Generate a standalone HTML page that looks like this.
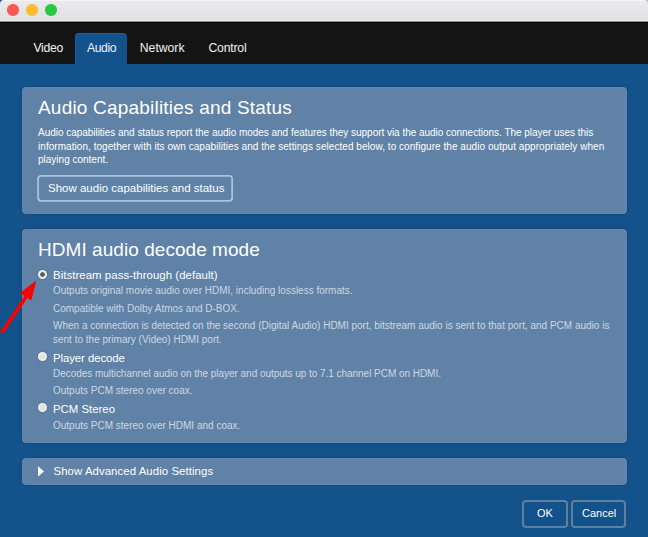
<!DOCTYPE html>
<html><head><meta charset="utf-8">
<style>
*{margin:0;padding:0;box-sizing:border-box}
html,body{width:648px;height:537px;overflow:hidden;background:#13528b;font-family:"Liberation Sans",sans-serif}
#titlebar{position:absolute;left:0;top:0;width:648px;height:22px;background:linear-gradient(#f6f5f7 0,#f6f5f7 1px,#eae9eb 1px,#e1e0e2 20px,#efefef 20px,#efefef 21px,#8c8c8c 21px);border-radius:4px 4px 0 0}
#trc{position:absolute;right:0;top:0;width:5px;height:5px;background:#b9b9b9}
.tl{position:absolute;top:4.4px;width:11.5px;height:11.5px;border-radius:50%}
#tabbar{position:absolute;left:0;top:22px;width:648px;height:42px;background:linear-gradient(#060606 0,#060606 1px,#141414 1px)}
.t{position:absolute;white-space:nowrap;color:#fff;line-height:1}
.tab{color:#f2f2f2;font-size:12.2px}
#activetab{position:absolute;left:75px;top:32.6px;width:52px;height:31.4px;background:#13528b;border-radius:4px 4px 0 0;box-shadow:inset 1px 1px 0 rgba(40,120,200,.35)}
.panel{position:absolute;left:22px;width:604.5px;background:#5f82a6;border-radius:4px;box-shadow:0 0 1.2px rgba(0,25,70,.7),inset 0 0 0 1px rgba(255,255,255,.04)}
.h{font-size:19px}
.body{font-size:10px}
.btn{position:absolute;border:2px solid #a8c2de;border-radius:4px}
.opt{font-size:11.4px}
.sub{font-size:10px;color:#cdd8e4}
.radio{position:absolute;width:9px;height:9px;border-radius:50%;background:radial-gradient(circle,#e0e0e0 0,#e6e6e6 2.5px,#f2f2f0 4.5px);box-shadow:0 0 1.5px rgba(10,50,100,.45)}
.radio.on{background:radial-gradient(circle,#555 0,#5a5a5a 1.9px,#ebebe9 2.7px,#ebebe9 4.5px)}
.dbtn{position:absolute;border:2px solid #5f819f;border-radius:4px}
</style></head><body>
<div id="trc"></div>
<div id="titlebar">
  <div class="tl" style="left:7.4px;background:#fc5753"></div>
  <div class="tl" style="left:26.3px;background:#fdbc2e"></div>
  <div class="tl" style="left:45px;background:#28c840"></div>
</div>
<div id="tabbar"></div>
<div id="activetab"></div>
<div class="t tab" style="left:33.5px;top:42px;letter-spacing:-0.3px">Video</div>
<div class="t tab" style="left:87px;top:42px;letter-spacing:-0.4px">Audio</div>
<div class="t tab" style="left:139.8px;top:42px">Network</div>
<div class="t tab" style="left:208.5px;top:42px;letter-spacing:-0.2px">Control</div>

<div class="panel" style="top:87px;height:126.5px"></div>
<div class="t h" style="left:38px;top:98px;letter-spacing:0.2px">Audio Capabilities and Status</div>
<div class="t body" style="left:38px;top:128px;letter-spacing:-0.03px">Audio capabilities and status report the audio modes and features they support via the audio connections. The player uses this</div>
<div class="t body" style="left:38px;top:142px;letter-spacing:0.05px">information, together with its own capabilities and the settings selected below, to configure the audio output appropriately when</div>
<div class="t body" style="left:38px;top:155px">playing content.</div>
<svg style="position:absolute;left:0;top:0" width="648" height="537"><rect x="38.15" y="175.8" width="194" height="25" rx="3" ry="3" fill="none" stroke="#a9c4e1" stroke-width="1.8"/></svg>
<div class="t" style="left:48px;top:183px;font-size:11.5px">Show audio capabilities and status</div>

<div class="panel" style="top:229px;height:214px"></div>
<div class="t h" style="left:38px;top:240px;letter-spacing:0.05px">HDMI audio decode mode</div>
<div class="radio on" style="left:37.5px;top:269.5px"></div>
<div class="t opt" style="left:53px;top:270px;letter-spacing:0.06px">Bitstream pass-through (default)</div>
<div class="t sub" style="left:53px;top:286px">Outputs original movie audio over HDMI, including lossless formats.</div>
<div class="t sub" style="left:53px;top:304px">Compatible with Dolby Atmos and D-BOX.</div>
<div class="t sub" style="left:53px;top:321px">When a connection is detected on the second (Digital Audio) HDMI port, bitstream audio is sent to that port, and PCM audio is</div>
<div class="t sub" style="left:53px;top:335px">sent to the primary (Video) HDMI port.</div>
<div class="radio" style="left:37.6px;top:352.1px"></div>
<div class="t opt" style="left:53px;top:353px;letter-spacing:-0.08px">Player decode</div>
<div class="t sub" style="left:53px;top:369px;letter-spacing:-0.035px">Decodes multichannel audio on the player and outputs up to 7.1 channel PCM on HDMI.</div>
<div class="t sub" style="left:53px;top:386px">Outputs PCM stereo over coax.</div>
<div class="radio" style="left:37.5px;top:403.4px"></div>
<div class="t opt" style="left:53px;top:404px">PCM Stereo</div>
<div class="t sub" style="left:53px;top:421px">Outputs PCM stereo over HDMI and coax.</div>

<div class="panel" style="top:458px;height:26.5px"></div>
<svg style="position:absolute;left:0;top:0" width="648" height="537"><path d="M38 466.3 L44 471.4 L38 476.6 Z" fill="#fff"/></svg>
<div class="t opt" style="left:53.5px;top:466px;letter-spacing:0.07px">Show Advanced Audio Settings</div>

<div class="dbtn" style="left:522px;top:500px;width:46.2px;height:27.5px"></div>
<div class="t" style="left:537px;top:508px;font-size:11px">OK</div>
<div class="dbtn" style="left:571px;top:500px;width:55.2px;height:27.5px"></div>
<div class="t" style="left:582px;top:508px;font-size:11px">Cancel</div>

<svg style="position:absolute;left:0;top:0" width="648" height="537">
  <line x1="1.6" y1="332.8" x2="26.3" y2="296.5" stroke="#ff0000" stroke-width="3.7"/>
  <path d="M36.3 280.6 L20 293 L31.3 300.6 Z" fill="#ff0000"/>
</svg>
</body></html>
